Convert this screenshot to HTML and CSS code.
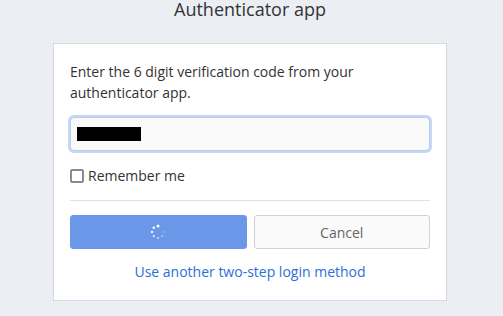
FILE: index.html
```html
<!DOCTYPE html>
<html>
<head>
<meta charset="utf-8">
<link rel="stylesheet" href="styles.css">
</head>
<body>
<h1 class="title">Authenticator app</h1>
<div class="card">
  <p class="intro">Enter the 6 digit verification code from your authenticator app.</p>
  <div class="field"><span class="redact"></span></div>
  <label class="remember"><span class="box"></span>Remember me</label>
  <hr class="sep">
  <div class="actions">
    <button class="btn primary">
      <svg width="16" height="16" viewBox="0 0 16 16" class="spin">
        <circle cx="8" cy="2" r="1.5" fill="#fff"/>
        <circle cx="3.8" cy="3.8" r="1.3" fill="#fff" opacity="0.95"/>
        <circle cx="2" cy="8" r="1.2" fill="#fff" opacity="0.9"/>
        <circle cx="3.8" cy="12.2" r="1.1" fill="#fff" opacity="0.8"/>
        <circle cx="8" cy="14" r="1" fill="#fff" opacity="0.7"/>
        <circle cx="12.2" cy="12.2" r="0.9" fill="#fff" opacity="0.55"/>
        <circle cx="14" cy="8" r="0.8" fill="#fff" opacity="0.4"/>
      </svg>
    </button>
    <button class="btn secondary">Cancel</button>
  </div>
  <a class="alt" href="#">Use another two-step login method</a>
</div>
</body>
</html>
```
FILE: styles.css
```css
html, body {
  margin: 0;
  padding: 0;
  background: #ebeef3;
  font-family: "Open Sans", "DejaVu Sans", sans-serif;
  color: #333;
}
body {
  padding-right: 3px;
}
.title {
  margin: 0;
  text-align: center;
  font-weight: 400;
  font-size: 18px;
  line-height: 18px;
  color: #333;
}
.card {
  width: 360px;
  margin: 25px auto 0;
  background: #fff;
  border: 1px solid #d6d9df;
  box-shadow: 0 1px 1px rgba(0,0,0,0.05);
  padding: 17px 16px 18px;
}
.intro {
  margin: 0;
  font-size: 14px;
  line-height: 21px;
  color: #333;
}
.field {
  margin-top: 14px;
  height: 32px;
  border: 1px solid #b9cdf0;
  box-shadow: 0 0 0 2px #c7d7f3;
  border-radius: 4px;
  background: #fafafa;
  display: flex;
  align-items: center;
  padding-left: 6px;
}
.redact {
  width: 64px;
  height: 14px;
  background: #000;
}
.remember {
  margin-top: 14px;
  display: flex;
  align-items: center;
  font-size: 14px;
  line-height: 21px;
  color: #333;
}
.box {
  width: 10px;
  height: 10px;
  border: 2px solid #8c8996;
  border-radius: 2px;
  margin-right: 4px;
  box-sizing: content-box;
}
.sep {
  margin: 14px 0 14px;
  border: 0;
  border-top: 1px solid #e0e1e4;
  height: 0;
}
.actions {
  display: flex;
  gap: 7px;
}
.btn {
  flex: 1;
  height: 34px;
  border-radius: 3px;
  font-family: inherit;
  font-size: 14px;
  display: flex;
  align-items: center;
  justify-content: center;
  padding: 0;
}
.primary {
  background: #6a97e8;
  border: 1px solid #6a97e8;
}
.secondary {
  background: #fafafa;
  border: 1px solid #cfd1d6;
  color: #666;
}
.alt {
  display: block;
  margin-top: 12px;
  text-align: center;
  font-size: 14px;
  line-height: 21px;
  color: #2a6fd9;
  text-decoration: none;
}
```
